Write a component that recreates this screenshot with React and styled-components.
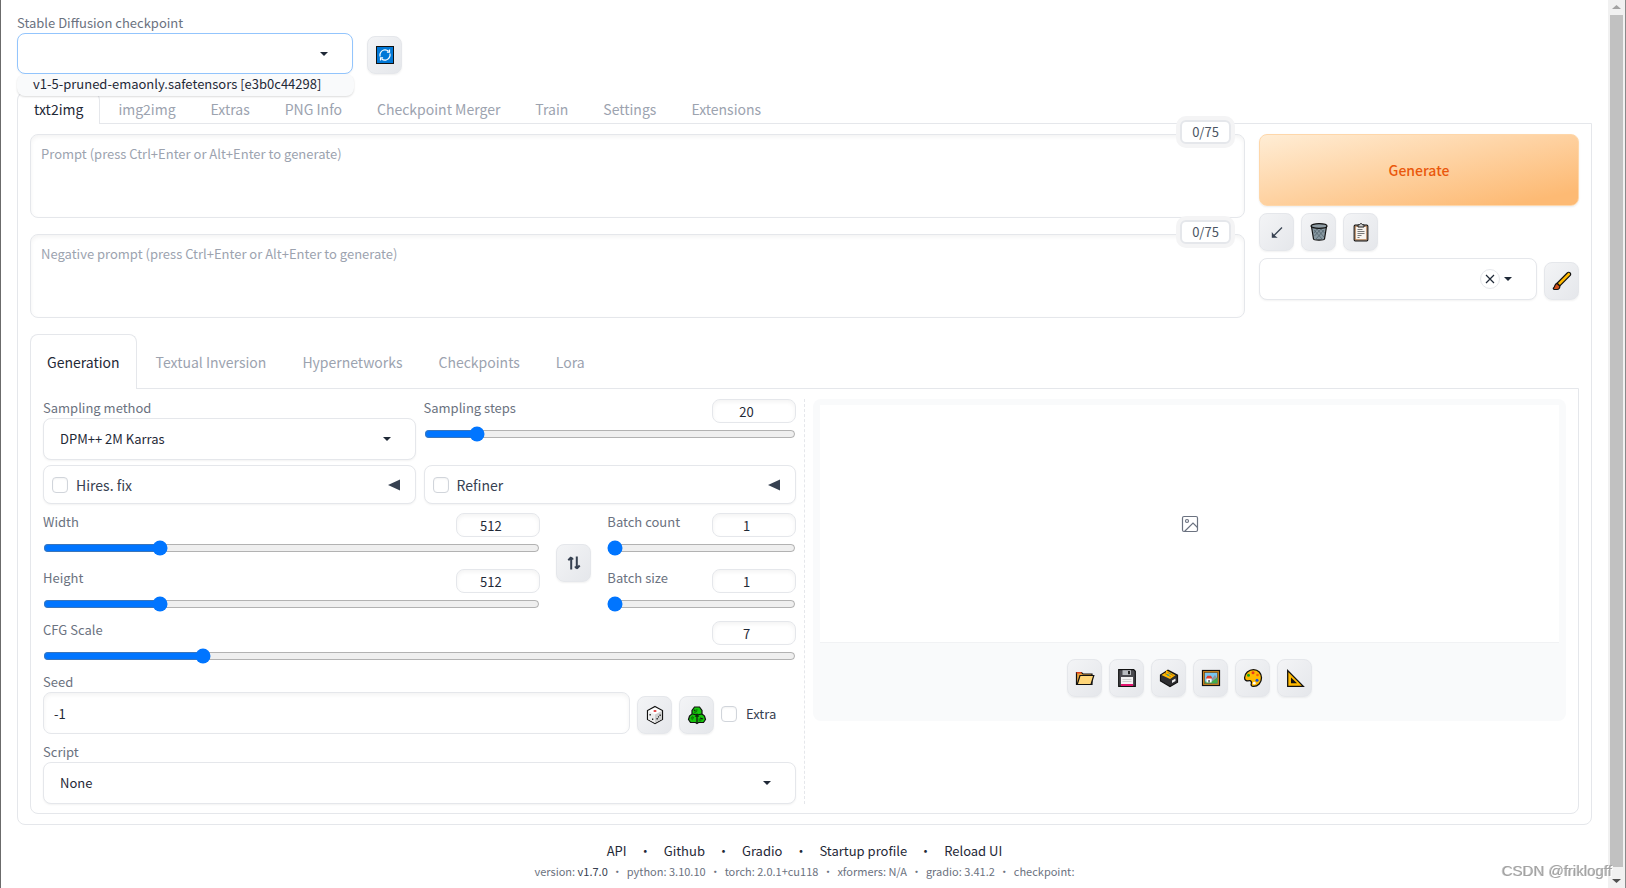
import React, { useId, useState } from "react";
import styled, { createGlobalStyle, css } from "styled-components";

const line = "#e5e7eb";
const ink = "#1f2937";
const muted = "#6b7280";
const faint = "#9ca3af";

const Global = createGlobalStyle`
  *, *::before, *::after { box-sizing: border-box; }
  body { margin: 0; background: #fff; }
  body, button, input, select, textarea {
    font-family: "Noto Sans CJK SC", "Noto Sans", sans-serif;
    font-size: 13px;
    line-height: 20px;
    color: ${ink};
  }
  button { cursor: pointer; }
  h1, p, ul { margin: 0; padding: 0; }
`;

/* ---------- page frame ---------- */

const Page = styled.div`
  display: flex;
  min-height: 100vh;
  border-left: 1px solid #6b6b6b;
  border-right: 1px solid #8a8a8a;
`;

const Content = styled.main`
  flex: 1;
  min-width: 0;
  padding: 14px 16px 4px;
`;

const ScrollTrack = styled.div`
  width: 17px;
  display: flex;
  flex-direction: column;
  align-items: center;
  justify-content: space-between;
  background: #f1f1f1;
  svg { display: block; }
`;

const ScrollThumb = styled.div`
  flex: 1;
  width: 13px;
  margin-bottom: 6px;
  background: #c1c1c1;
`;

const Watermark = styled.div`
  position: fixed;
  right: 14px;
  bottom: 7px;
  font: 15px/20px "Liberation Sans", Arial, sans-serif;
  color: #a3a3a3;
  text-shadow: 1px 1px 0 #fff, -1px 0 0 #c9c9c9;
  pointer-events: none;
`;

/* ---------- shared controls ---------- */

const Label = styled.label`
  display: block;
  margin-bottom: 1px;
  color: ${muted};
  line-height: 18px;
  white-space: nowrap;
`;

const fieldShape = css`
  border: 1px solid ${line};
  border-radius: 8px;
  background: #fff;
`;

const ToolButton = styled.button`
  flex: none;
  display: flex;
  align-items: center;
  justify-content: center;
  width: 35px;
  height: 38px;
  padding: 0;
  border: 1px solid ${line};
  border-radius: 8px;
  background: linear-gradient(to bottom right, #f3f4f6, #e5e7eb);
  box-shadow: 0 1px 2px rgba(0, 0, 0, 0.06);
  color: #374151;
  svg { display: block; }
`;

const FieldBox = styled.div`
  position: relative;
  flex: 1;
  min-width: 0;
`;

const fieldInner = css`
  ${fieldShape}
  display: block;
  width: 100%;
  height: ${(p) => p.$h || 41}px;
  padding: 0 16px;
  box-shadow: 0 1px 2px rgba(0, 0, 0, 0.05);
  outline: none;
  appearance: none;
  border-color: ${(p) => (p.$focus ? "#93c5fd" : line)};
`;

const Select = styled.select`${fieldInner}`;
const ComboInput = styled.input`${fieldInner}`;

const FieldAdornment = styled.span`
  position: absolute;
  right: 25px;
  top: 0;
  bottom: 0;
  display: flex;
  align-items: center;
  gap: 4px;
  pointer-events: none;
`;

const ClearButton = styled.button`
  display: flex;
  align-items: center;
  justify-content: center;
  width: 20px;
  height: 20px;
  padding: 0;
  border: 1px solid ${line};
  border-radius: 50%;
  background: #fff;
`;

const Options = styled.ul`
  position: absolute;
  z-index: 2;
  top: 100%;
  left: 0;
  right: -1px;
  list-style: none;
  background: #f9fafb;
  border-radius: 8px;
  box-shadow: 0 1px 2px rgba(0, 0, 0, 0.14);
`;

const Option = styled.li`
  padding: 0 16px 2px;
  white-space: nowrap;
`;

const Checkbox = styled.input`
  flex: none;
  appearance: none;
  width: 16px;
  height: 16px;
  margin: 0;
  border: 1px solid #d1d5db;
  border-radius: 4px;
  background: #fff;
  box-shadow: inset 0 1px 2px rgba(0, 0, 0, 0.05);
  &:checked { background: #0075ff; }
`;

/* ---------- checkpoint header ---------- */

const QuickSettings = styled.div`
  display: flex;
  align-items: flex-end;
  gap: 14px;
  margin-bottom: 18px;
`;

const Checkpoint = styled.div`
  width: 336px;
`;

/* ---------- tabs ---------- */

const TabBar = styled.div`
  display: flex;
  gap: ${(p) => p.$gap}px;
  position: relative;
  margin-bottom: -1px;
`;

const Tab = styled.button`
  height: ${(p) => p.$h}px;
  padding: 0 16px;
  border: 1px solid transparent;
  border-bottom: 0;
  border-radius: 8px 8px 0 0;
  background: transparent;
  font-size: 14px;
  color: ${faint};
  white-space: nowrap;
  &[aria-selected="true"] {
    border-color: ${line};
    background: #fff;
    color: ${ink};
  }
`;

const Panel = styled.section`
  border: 1px solid ${line};
  border-radius: 0 0 8px 8px;
  padding: ${(p) => p.$pad};
`;

/* ---------- prompts ---------- */

const PromptArea = styled.div`
  display: flex;
  gap: 14px;
  margin-bottom: 16px;
`;

const Prompts = styled.div`
  flex: 1;
  min-width: 0;
  display: flex;
  flex-direction: column;
  gap: 16px;
`;

const PromptWrap = styled.div`
  position: relative;
`;

const PromptBox = styled.textarea`
  ${fieldShape}
  display: block;
  width: 100%;
  height: 84px;
  padding: 9px 10px;
  resize: none;
  outline: none;
  box-shadow: inset 0 2px 4px rgba(0, 0, 0, 0.05);
  &::placeholder { color: ${faint}; opacity: 1; }
`;

const TokenCount = styled.span`
  position: absolute;
  top: -14px;
  right: 14px;
  width: 51px;
  border: 2px solid ${line};
  border-radius: 6px;
  background: #fff;
  box-shadow: 0 0 0 4px #f4f4f5;
  line-height: 20px;
  text-align: center;
  color: #4b5563;
`;

const Actions = styled.aside`
  flex: none;
  width: 320px;
  display: flex;
  flex-direction: column;
  gap: 7px;
`;

const GenerateButton = styled.button`
  height: 72px;
  border: 1px solid #fed7aa;
  border-radius: 8px;
  background: linear-gradient(to bottom right, #ffedd5, #fdba74 90%);
  box-shadow: 0 1px 2px rgba(0, 0, 0, 0.08);
  font-size: 14px;
  font-weight: 500;
  color: #ea580c;
`;

const ButtonRow = styled.div`
  display: flex;
  justify-content: ${(p) => (p.$center ? "center" : "flex-start")};
  align-items: flex-end;
  gap: 7px;
`;

/* ---------- generation settings ---------- */

const Workspace = styled.div`
  display: grid;
  grid-template-columns: minmax(0, 1fr) 1px minmax(0, 1fr);
  gap: 8px;
`;

const Settings = styled.div`
  display: flex;
  flex-direction: column;
  gap: 9px;
`;

const Divider = styled.div`
  border-left: 1px dashed ${line};
`;

const TwoColumns = styled.div`
  display: grid;
  grid-template-columns: 1fr 1fr;
  gap: 5px 8px;
`;

const SizeRow = styled.div`
  display: grid;
  grid-template-columns: 29fr 35px 11fr;
  align-items: center;
  gap: 16px;
`;

const SliderStack = styled.div`
  display: flex;
  flex-direction: column;
  gap: 13px;
`;

const SliderBlock = styled.div`
  display: flex;
  flex-direction: column;
  gap: 3px;
`;

const SliderHead = styled.div`
  display: flex;
  justify-content: space-between;
  height: 24px;
`;

const NumberBox = styled.input`
  ${fieldShape}
  width: 84px;
  height: 24px;
  padding: 0 8px;
  text-align: center;
  outline: none;
  box-shadow: inset 0 2px 4px rgba(0, 0, 0, 0.05);
  &::-webkit-inner-spin-button { opacity: 0; }
`;

const Range = styled.input`
  display: block;
  height: 16px;
  margin: 0;
`;

const Accordion = styled.div`
  ${fieldShape}
  display: flex;
  align-items: center;
  gap: 8px;
  height: 39px;
  padding: 0 15px 0 8px;
  box-shadow: 0 1px 2px rgba(0, 0, 0, 0.05);
`;

const AccordionTitle = styled.label`
  flex: 1;
  font-size: 14px;
  color: #374151;
`;

const FoldButton = styled.button`
  display: flex;
  padding: 0;
  border: 0;
  background: none;
`;

const SeedRow = styled.div`
  display: flex;
  align-items: flex-end;
  gap: 7px;
`;

const SeedInput = styled.input`
  ${fieldShape}
  flex: 1;
  min-width: 0;
  height: 42px;
  padding: 0 10px;
  outline: none;
  box-shadow: inset 0 2px 4px rgba(0, 0, 0, 0.05);
  &::-webkit-inner-spin-button { opacity: 0; }
`;

const ExtraToggle = styled.label`
  display: flex;
  align-items: center;
  gap: 9px;
  width: 75px;
  height: 40px;
  color: #374151;
`;

/* ---------- output ---------- */

const Output = styled.div`
  align-self: start;
  padding: 6px 7px 24px;
  border-radius: 8px;
  background: #f9fafb;
`;

const Gallery = styled.div`
  display: flex;
  align-items: center;
  justify-content: center;
  height: 238px;
  margin-bottom: 16px;
  background: #fff;
  border-bottom: 1px solid #f1f2f4;
`;

/* ---------- footer ---------- */

const Footer = styled.footer`
  padding-top: 16px;
  text-align: center;
`;

const FooterLinks = styled.nav`
  display: flex;
  justify-content: center;
  gap: 12px;
  a { color: ${ink}; text-decoration: none; }
`;

const Versions = styled.p`
  display: flex;
  justify-content: center;
  gap: 4px;
  font-size: 11px;
  color: ${muted};
  a { color: #374151; text-decoration: none; }
`;

/* ---------- icons ---------- */

const Icon = ({ children }) => (
  <svg width="20" height="20" viewBox="0 0 20 20" fill="none" aria-hidden="true">{children}</svg>
);

const RefreshIcon = () => (
  <Icon>
    <rect x="1.5" y="1.5" width="17" height="17" fill="#0078d7" stroke="#111" />
    <path d="M5.200 8.500A5 5 0 0 1 13.500 6.300M14.800 11.500A5 5 0 0 1 6.500 13.700M5 8.500v3M15 8.500v3" stroke="#fff" strokeWidth="1.200" />
    <path d="M14.500 4.500v2.600h-2.600M5.500 15.500v-2.600h2.600" stroke="#fff" strokeWidth="1.200" />
  </Icon>
);

const TrashIcon = () => (
  <Icon>
    <path d="M2.500 4.500 4.500 17c.3 1.500 10.700 1.500 11 0l2-12.500z" fill="#8797a0" stroke="#111" strokeWidth="1.200" />
    <ellipse cx="10" cy="4" rx="8" ry="2.300" fill="#8e9ca4" stroke="#111" strokeWidth="1.200" />
    <path d="m5 8 8 9M8 7l7 8M12 7l3.500 4M15 8l-8 9M12 7l-6.500 7M8 7l-3 4" stroke="#4d5f69" strokeWidth=".7" />
  </Icon>
);

const ClipboardIcon = () => (
  <Icon>
    <rect x="3.200" y="3.200" width="13.600" height="15.600" rx="1" fill="#f7f3ee" stroke="#111" strokeWidth="1.200" />
    <rect x="4.300" y="4.300" width="11.400" height="13.400" stroke="#b5835a" />
    <path d="M7 5V2.800h1.500L10 1.200l1.500 1.600H13V5z" fill="#d0d0d0" stroke="#222" />
    <path d="M6.500 7.500h5M6.500 9.500h7M6.500 11.500h7M6.500 13.500h4M6.500 15.500h2" stroke="#777" />
  </Icon>
);

const BrushIcon = () => (
  <Icon>
    <path d="M18 1.800c1 .9.800 2 0 2.800L7.800 15 5 12.300 15.200 2c.9-.9 2-1 2.800-.2z" fill="#ffb900" stroke="#111" strokeWidth="1.200" />
    <path d="M5 12.300 7.800 15c.2 2-1 3.500-2.800 3.500H2.500c-1.300-.2-1.500-1.200-.8-1.700C3 16 2.300 13 5 12.300z" fill="#d1501a" stroke="#111" strokeWidth="1.200" />
  </Icon>
);

const DiceIcon = () => (
  <Icon>
    <path d="m10 1.500 7.500 4v9l-7.500 4-7.500-4v-9z" fill="#fff" stroke="#111" strokeWidth="1.200" />
    <path d="m10 9.500 7-3.700v8.500l-7 3.700z" fill="#cfcfcf" />
    <path d="m3 5.800 7 3.700V18l-7-3.700z" fill="#ededed" />
    <ellipse cx="10" cy="6" rx="1.600" ry="1.100" fill="#e23c3c" />
    <path d="M4.500 9h1.300v1.500H4.500zM7 13.500h1.300V15H7zM11.500 13h1.300v1.500h-1.300zM14.500 9.500h1.300V11h-1.300zM13 11.300h1v1.300h-1z" fill="#222" />
  </Icon>
);

const RecycleIcon = () => (
  <Icon>
    <path d="M7.500 2h5L15 5.500V9l2.500 2 1 3.500-2 3h-5L10 18.500 8.500 17.500h-5l-2-3 1-3.500L5 9V5.500z" fill="#16c60c" stroke="#111" strokeWidth="1.200" />
    <path d="M10 10 5.500 9M10 10l5-1M10 10v8M7 5l3 1.500M13 13l3 1M4 13l3-.5" stroke="#111" strokeWidth="1.200" />
    <path d="m10 8 2.300 3.800H7.700z" fill="#0b2b0a" />
    <path d="M6.500 8 9 4l2 .5L8.500 8.500zM11.500 13.500l3.500.5-1 2.500h-2.500zM3.500 13.500l2-3 1.500 2-1.500 3z" fill="#0c8a06" />
  </Icon>
);

const FolderIcon = () => (
  <Icon>
    <path d="M1.500 16.500V4.500h5l1.500 1.500h9v10.500z" fill="#e8a33d" stroke="#111" strokeWidth="1.200" />
    <path d="M1.500 4h5v1.500h-5z" fill="#e2401b" />
    <path d="M5 7.500h13.800L16 16.500H2.200z" fill="#ffd679" stroke="#111" strokeWidth="1.200" />
  </Icon>
);

const FloppyIcon = () => (
  <Icon>
    <path d="M1.700 1.700h15l1.600 1.600v15H1.700z" fill="#4a4a4f" stroke="#111" strokeWidth="1.200" />
    <path d="M5.500 2.200h8.500V7H5.500z" fill="#b9bcc0" />
    <path d="M11 3h2v3.200h-2z" fill="#222" />
    <path d="M4 9h12v9H4z" fill="#f3f3f3" />
    <path d="M4 16h12v2H4z" fill="#e3126d" />
    <path d="M5.500 11.500h9M5.500 13.500h9" stroke="#ccc" />
  </Icon>
);

const CardBoxIcon = () => (
  <Icon>
    <path d="M1.500 7 9 2.200l9.500 5v7L11 18.500 1.500 13z" fill="#2e2e31" stroke="#111" strokeWidth="1.200" />
    <path d="M2.500 7 7 4.200V2l3 1.700 6.500 3.600L11 11z" fill="#ffb900" />
    <path d="m6 5.500 6 3.500M8.500 4.200l6 3.500" stroke="#9c5a12" strokeWidth=".7" />
    <path d="m8 6.500 2 1M10.500 5.500l1 .5" stroke="#17a6a6" strokeWidth="1.300" />
    <path d="m13 12.500 3.500-2v2.500L13 15z" fill="#f2f2f2" />
  </Icon>
);

const PictureIcon = () => (
  <Icon>
    <rect x="1.500" y="2.500" width="17" height="15" fill="#d58a1c" stroke="#111" strokeWidth="1.200" />
    <rect x="3.500" y="4.500" width="13" height="11" fill="#79c6f2" stroke="#5c3a0c" strokeWidth=".6" />
    <path d="M11 10.500 14 7l2.300 3v5.300H11z" fill="#8d9aa3" />
    <path d="M4 13.500h7l5.300-4v5.800H4z" fill="#3fae49" />
    <path d="M5.500 10h5v4.500h-5z" fill="#fff" />
    <path d="m4.800 10.500 1.500-2.700h3.700l1.500 2.700z" fill="#e03b2a" />
    <path d="M7.300 12h1.500v2.500H7.300z" fill="#555" />
  </Icon>
);

const PaletteIcon = () => (
  <Icon>
    <path d="M10.500 1.600c4.700 0 8 3.500 8 8.200 0 5-3.500 8.600-8 8.600-2.300 0-2.700-1.500-2.200-3 .5-1.800-.3-2.900-2-2.700-3 .4-4.800-.4-4.700-3 .1-4.400 4.200-8.100 8.900-8.100z" fill="#ffb900" stroke="#111" strokeWidth="1.300" />
    <circle cx="10" cy="4.800" r="1.500" fill="#e8391d" />
    <circle cx="5.500" cy="7.300" r="1.500" fill="#16a315" />
    <circle cx="14.500" cy="7" r="1.300" fill="#f7630c" />
    <circle cx="14" cy="12.300" r="1.500" fill="#1755e0" />
    <circle cx="11.300" cy="15.200" r="1.400" fill="#fff" />
  </Icon>
);

const TriangleRulerIcon = () => (
  <Icon>
    <path d="M2.700 2.500v15.800h15.600z" fill="#ffb900" stroke="#111" strokeWidth="1.300" />
    <path d="M6 9.500v5.800h6z" fill="#111" />
  </Icon>
);

const DiagonalArrowIcon = () => (
  <Icon>
    <path d="M15 5.500 5.500 15" stroke="#374151" strokeWidth="1.200" />
    <path d="M4.800 15.700V10l2 2.600 1.500 1.500 2.400 1.600z" fill="#374151" />
  </Icon>
);

const SwapIcon = () => (
  <Icon>
    <path d="M7.200 16.500V5M12.800 3.500V15M4.300 7.200l2.900-3M12.800 15.500l2.900-3" stroke="#374151" strokeWidth="2" />
    <path d="m7.200 4.200 2 2.200M10.800 13.500l2 2.200" stroke="#374151" strokeWidth="1.500" />
  </Icon>
);

const Caret = () => (
  <svg width="8" height="4" viewBox="0 0 8 4" aria-hidden="true"><path d="M0 0h8L4 4z" fill={ink} /></svg>
);

const Cross = () => (
  <svg width="10" height="10" viewBox="0 0 10 10" aria-hidden="true"><path d="m1 1 8 8M9 1 1 9" stroke={ink} strokeWidth="1.200" /></svg>
);

const FoldArrow = () => (
  <svg width="12" height="12" viewBox="0 0 12 12" aria-hidden="true"><path d="M0 6 12 .500v11z" fill="#374151" /></svg>
);

const ImagePlaceholder = () => (
  <svg width="18" height="18" viewBox="0 0 18 18" fill="none" stroke={muted} strokeWidth="1.200" aria-label="No image">
    <rect x="1.500" y="1.500" width="15" height="15" rx="1.500" />
    <circle cx="6" cy="6" r="1.500" />
    <path d="m3.500 16.500 8.500-8.500 4.500 4.500" />
  </svg>
);

const ScrollArrow = ({ down }) => (
  <svg width="17" height="15" viewBox="0 0 17 15" aria-hidden="true">
    <path d={down ? "M4 6h9l-4.500 4z" : "M4 9h9L8.500 5z"} fill={down ? "#505050" : "#a3a3a3"} />
  </svg>
);

/* ---------- composed parts ---------- */

function Tabs({ items, height, gap, label }) {
  const [active, setActive] = useState(items[0]);
  return (
    <TabBar role="tablist" aria-label={label} $gap={gap}>
      {items.map((name) => (
        <Tab key={name} type="button" role="tab" $h={height} aria-selected={name === active} onClick={() => setActive(name)}>
          {name}
        </Tab>
      ))}
    </TabBar>
  );
}

function Prompt({ placeholder, label }) {
  return (
    <PromptWrap>
      <PromptBox aria-label={label} placeholder={placeholder} />
      <TokenCount>0/75</TokenCount>
    </PromptWrap>
  );
}

function Slider({ label, min, max, step = 1, initial }) {
  const id = useId();
  const [value, setValue] = useState(initial);
  const shared = { min, max, step, value, onChange: (e) => setValue(e.target.value) };
  return (
    <SliderBlock>
      <SliderHead>
        <Label htmlFor={id}>{label}</Label>
        <NumberBox id={id} type="number" {...shared} />
      </SliderHead>
      <Range type="range" aria-label={label} {...shared} />
    </SliderBlock>
  );
}

function Dropdown({ label, value }) {
  const id = useId();
  return (
    <div>
      <Label htmlFor={id}>{label}</Label>
      <FieldBox>
        <Select id={id} defaultValue={value} $h={42}>
          <option>{value}</option>
        </Select>
        <FieldAdornment><Caret /></FieldAdornment>
      </FieldBox>
    </div>
  );
}

function FoldSection({ title }) {
  const id = useId();
  return (
    <Accordion>
      <Checkbox id={id} type="checkbox" />
      <AccordionTitle htmlFor={id}>{title}</AccordionTitle>
      <FoldButton type="button" aria-label={`Expand ${title}`}><FoldArrow /></FoldButton>
    </Accordion>
  );
}

const outputTools = [
  ["Open output folder", FolderIcon],
  ["Save image", FloppyIcon],
  ["Save zip", CardBoxIcon],
  ["Send to img2img", PictureIcon],
  ["Send to inpaint", PaletteIcon],
  ["Send to extras", TriangleRulerIcon],
];

const links = ["API", "Github", "Gradio", "Startup profile", "Reload UI"];
const versions = ["python: 3.10.10", "torch: 2.0.1+cu118", "xformers: N/A", "gradio: 3.41.2", "checkpoint:"];

export default function App() {
  return (
    <>
      <Global />
      <Page>
        <Content>
          <QuickSettings>
            <Checkpoint>
              <Label htmlFor="checkpoint">Stable Diffusion checkpoint</Label>
              <FieldBox>
                <ComboInput id="checkpoint" role="combobox" aria-expanded="true" aria-controls="checkpoint-list" $focus />
                <FieldAdornment><Caret /></FieldAdornment>
                <Options id="checkpoint-list" role="listbox">
                  <Option role="option" aria-selected="false">v1-5-pruned-emaonly.safetensors [e3b0c44298]</Option>
                </Options>
              </FieldBox>
            </Checkpoint>
            <ToolButton type="button" aria-label="Refresh checkpoints"><RefreshIcon /></ToolButton>
          </QuickSettings>

          <Tabs
            label="Main"
            height={32}
            gap={1}
            items={["txt2img", "img2img", "Extras", "PNG Info", "Checkpoint Merger", "Train", "Settings", "Extensions"]}
          />
          <Panel $pad="10px 12px 10px">
            <PromptArea>
              <Prompts>
                <Prompt label="Prompt" placeholder="Prompt (press Ctrl+Enter or Alt+Enter to generate)" />
                <Prompt label="Negative prompt" placeholder="Negative prompt (press Ctrl+Enter or Alt+Enter to generate)" />
              </Prompts>
              <Actions>
                <GenerateButton type="button">Generate</GenerateButton>
                <ButtonRow>
                  <ToolButton type="button" aria-label="Read generation parameters"><DiagonalArrowIcon /></ToolButton>
                  <ToolButton type="button" aria-label="Clear prompt"><TrashIcon /></ToolButton>
                  <ToolButton type="button" aria-label="Apply styles"><ClipboardIcon /></ToolButton>
                </ButtonRow>
                <ButtonRow>
                  <FieldBox>
                    <ComboInput role="combobox" aria-label="Styles" aria-expanded="false" $h={42} />
                    <FieldAdornment>
                      <ClearButton type="button" aria-label="Clear styles"><Cross /></ClearButton>
                      <Caret />
                    </FieldAdornment>
                  </FieldBox>
                  <ToolButton type="button" aria-label="Edit styles"><BrushIcon /></ToolButton>
                </ButtonRow>
              </Actions>
            </PromptArea>

            <Tabs
              label="Generation"
              height={55}
              gap={2}
              items={["Generation", "Textual Inversion", "Hypernetworks", "Checkpoints", "Lora"]}
            />
            <Panel $pad="10px 12px 9px">
              <Workspace>
                <Settings>
                  <TwoColumns>
                    <Dropdown label="Sampling method" value="DPM++ 2M Karras" />
                    <Slider label="Sampling steps" min={1} max={150} initial={20} />
                    <FoldSection title="Hires. fix" />
                    <FoldSection title="Refiner" />
                  </TwoColumns>
                  <SizeRow>
                    <SliderStack>
                      <Slider label="Width" min={64} max={2048} step={8} initial={512} />
                      <Slider label="Height" min={64} max={2048} step={8} initial={512} />
                    </SliderStack>
                    <ToolButton type="button" aria-label="Switch width and height"><SwapIcon /></ToolButton>
                    <SliderStack>
                      <Slider label="Batch count" min={1} max={100} initial={1} />
                      <Slider label="Batch size" min={1} max={8} initial={1} />
                    </SliderStack>
                  </SizeRow>
                  <Slider label="CFG Scale" min={1} max={30} initial={7} />
                  <div>
                    <Label htmlFor="seed">Seed</Label>
                    <SeedRow>
                      <SeedInput id="seed" type="number" defaultValue={-1} />
                      <ToolButton type="button" aria-label="Random seed"><DiceIcon /></ToolButton>
                      <ToolButton type="button" aria-label="Reuse seed"><RecycleIcon /></ToolButton>
                      <ExtraToggle><Checkbox type="checkbox" />Extra</ExtraToggle>
                    </SeedRow>
                  </div>
                  <Dropdown label="Script" value="None" />
                </Settings>
                <Divider />
                <Output>
                  <Gallery><ImagePlaceholder /></Gallery>
                  <ButtonRow $center>
                    {outputTools.map(([name, Glyph]) => (
                      <ToolButton key={name} type="button" aria-label={name}><Glyph /></ToolButton>
                    ))}
                  </ButtonRow>
                </Output>
              </Workspace>
            </Panel>
          </Panel>

          <Footer>
            <FooterLinks>
              {links.map((name, i) => (
                <React.Fragment key={name}>
                  {i > 0 && <span>•</span>}
                  <a href="#">{name}</a>
                </React.Fragment>
              ))}
            </FooterLinks>
            <Versions>
              <span>version: <a href="#">v1.7.0</a></span>
              {versions.map((text) => (
                <React.Fragment key={text}>
                  <span>•</span>
                  <span>{text}</span>
                </React.Fragment>
              ))}
            </Versions>
          </Footer>
        </Content>
        <ScrollTrack aria-hidden="true">
          <ScrollArrow />
          <ScrollThumb />
          <ScrollArrow down />
        </ScrollTrack>
      </Page>
      <Watermark>CSDN @friklogff</Watermark>
    </>
  );
}
